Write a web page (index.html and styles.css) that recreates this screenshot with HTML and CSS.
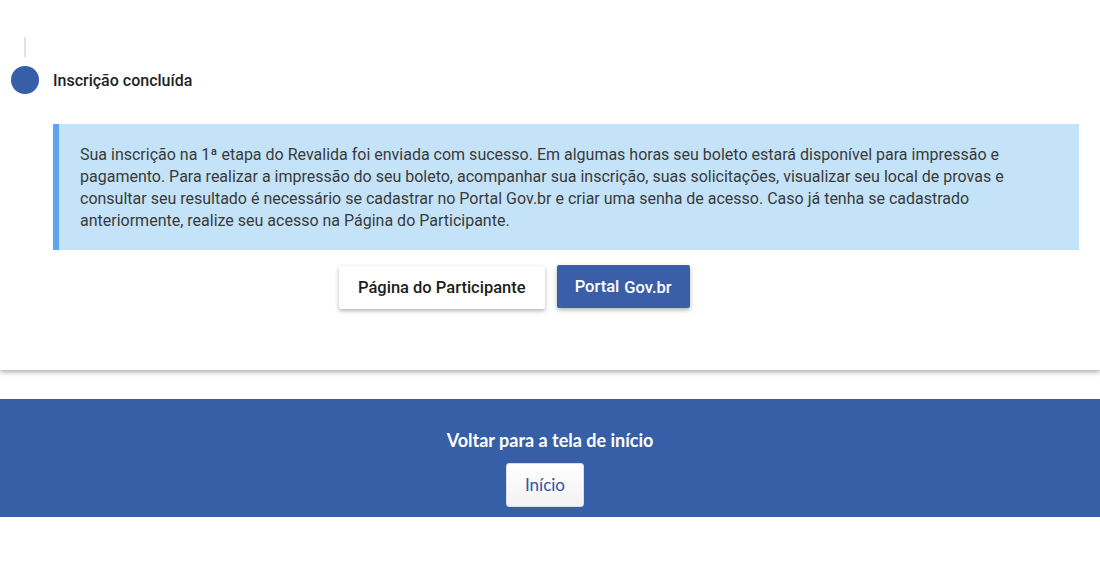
FILE: index.html
```html
<!DOCTYPE html>
<html lang="pt-BR">
<head>
    <meta charset="UTF-8">
    <meta name="viewport" content="width=device-width, initial-scale=1.0">
    <title>Revalida - Inscrição</title>
    <link rel="stylesheet" href="styles.css">
</head>
<body>
    <main class="card">
        <div class="step-line"></div>
        <div class="step">
            <span class="step-dot"></span>
            <h3 class="step-title">Inscrição concluída</h3>
        </div>
        <div class="alert">
            <p>Sua inscrição na 1ª etapa do Revalida foi enviada com sucesso. Em algumas horas seu boleto estará disponível para impressão e pagamento. Para realizar a impressão do seu boleto, acompanhar sua inscrição, suas solicitações, visualizar seu local de provas e consultar seu resultado é necessário se cadastrar no Portal Gov.br e criar uma senha de acesso. Caso já tenha se cadastrado anteriormente, realize seu acesso na Página do Participante.</p>
        </div>
        <div class="actions">
            <a class="btn" href="#">Página do Participante</a>
            <a class="btn btn-primary" href="#">Portal <span class="gov">Gov.br</span></a>
        </div>
    </main>
    <footer class="back">
        <h2>Voltar para a tela de início</h2>
        <a class="btn-home" href="#">Início</a>
    </footer>
</body>
</html>
```

FILE: styles.css
```css
:root {
    font-family: Roboto, 'Noto Sans', sans-serif;
    color: #333333;
    background-color: #ffffff;
}
body {
    margin: 0;
}
a {
    text-decoration: none;
}

.card {
    background: #ffffff;
    padding: 37px 21px 61px 0;
    box-shadow: 0 2px 5px rgba(0, 0, 0, 0.35);
}
.step-line {
    width: 2px;
    height: 20px;
    margin-left: 24px;
    background: #e2e2e2;
}
.step {
    display: flex;
    align-items: center;
    gap: 14px;
    margin: 9px 0 0 11px;
}
.step-dot {
    width: 28px;
    height: 28px;
    border-radius: 50%;
    background: #365fa8;
}
.step-title {
    margin: 0;
    font-size: 16px;
    font-weight: 500;
    color: #222222;
}

.alert {
    margin: 30px 0 0 53px;
    padding: 20px 21px 18px 21px;
    background: #c4e3f8;
    border-left: 6px solid #5ba5f2;
}
.alert p {
    margin: 0;
    font-size: 16px;
    line-height: 22px;
    color: #3a3a3a;
}

.actions {
    display: flex;
    gap: 12px;
    margin-top: 16px;
    padding-left: 339px;
}
.btn {
    display: inline-flex;
    align-items: center;
    height: 43px;
    padding: 0 19px;
    font-size: 16.5px;
    font-weight: 500;
    color: #1d1d1d;
    background: #ffffff;
    border-radius: 2px;
    box-shadow: 0 2px 4px rgba(0, 0, 0, 0.3);
}
.btn-primary {
    margin-top: -1px;
    padding: 0 18px;
    background: #3a5fa8;
    color: #ffffff;
}
.gov {
    margin-left: 5px;
    position: relative;
    top: 1px;
}

.back {
    margin-top: 29px;
    padding: 29px 0 10px;
    background: #365fa8;
    text-align: center;
    font-family: Lato, 'Open Sans', sans-serif;
}
.back h2 {
    margin: 0 0 11px;
    font-size: 18px;
    line-height: 24px;
    font-weight: 700;
    color: #ffffff;
}
.btn-home {
    display: inline-block;
    width: 78px;
    height: 44px;
    margin-right: 10px;
    line-height: 42px;
    box-sizing: border-box;
    font-size: 17px;
    color: #2c56a8;
    background: linear-gradient(#ffffff, #f2f2f2);
    border: 1px solid #d8dde8;
    border-radius: 3px;
}
```
